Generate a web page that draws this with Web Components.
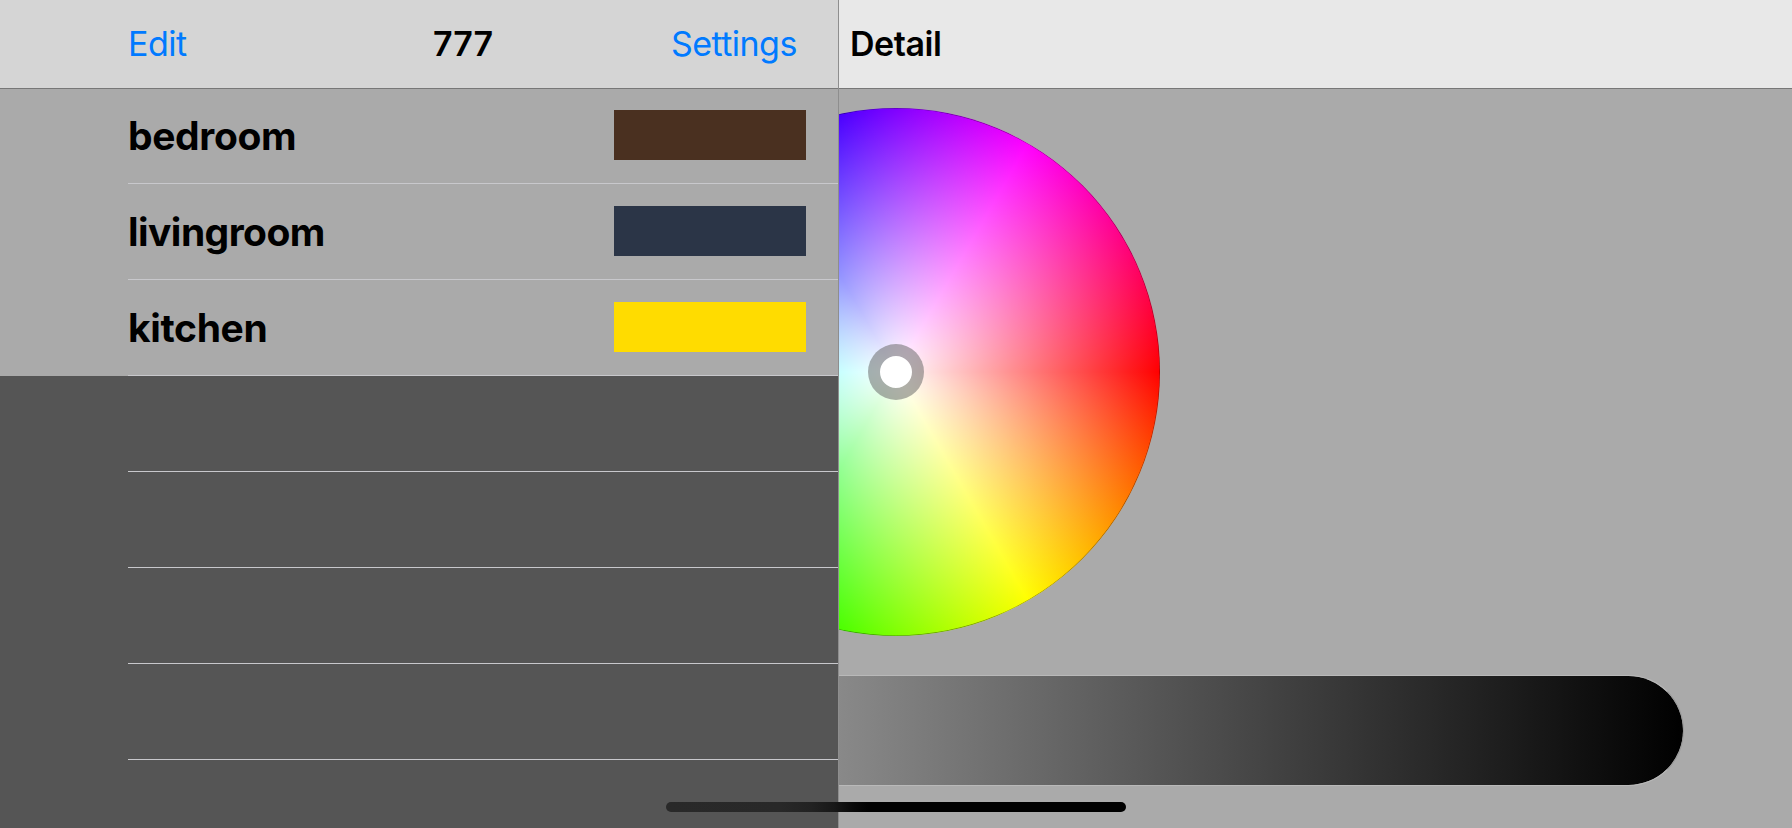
<!DOCTYPE html>
<html lang="en">
<head>
<meta charset="utf-8">
<title>777</title>
<style>
html,body{margin:0;height:100%;overflow:hidden;background:#aaa}
body{font-family:Inter,"Liberation Sans",sans-serif;color:#000}
</style>
</head>
<body>
<split-view>
  <nav-bar slot="master-bar" variant="master">
    <bar-label kind="edit">Edit</bar-label>
    <bar-label kind="title">777</bar-label>
    <bar-label kind="settings">Settings</bar-label>
  </nav-bar>
  <room-row slot="master" color="#4a3020">bedroom</room-row>
  <room-row slot="master" color="#2b3547" style="letter-spacing:-.55px">livingroom</room-row>
  <room-row slot="master" color="#ffdc00">kitchen</room-row>
  <room-row slot="master" empty></room-row>
  <room-row slot="master" empty></room-row>
  <room-row slot="master" empty></room-row>
  <room-row slot="master" empty></room-row>
  <nav-bar slot="detail-bar" variant="detail">
    <bar-label kind="detail">Detail</bar-label>
  </nav-bar>
  <color-wheel slot="detail"></color-wheel>
  <brightness-slider slot="detail"></brightness-slider>
</split-view>
<home-indicator></home-indicator>
<script>
function define(name, html, init) {
  customElements.define(name, class extends HTMLElement {
    constructor() {
      super();
      this.attachShadow({ mode: 'open' }).innerHTML = html;
    }
    connectedCallback() { if (init) init(this); }
  });
}

define('split-view', `
<style>
:host{display:grid;grid-template-columns:838px 1px 1fr;width:100vw;height:100vh;overflow:hidden}
section{display:flex;flex-direction:column;min-width:0;overflow:hidden}
.master{background:#555}
.divider{background:#8e8e8e}
.detail{background:#aaa}
.content{display:flex;flex-direction:column}
.detail .content{padding-top:20px}
</style>
<section class="master"><slot name="master-bar"></slot><div class="content"><slot name="master"></slot></div></section>
<div class="divider"></div>
<section class="detail"><slot name="detail-bar"></slot><div class="content"><slot name="detail"></slot></div></section>
`);

define('nav-bar', `
<style>
:host{display:grid;flex:none;box-sizing:border-box;height:88px;padding-top:23px;align-items:start;box-shadow:0 1px #777;position:relative;z-index:1}
:host([variant=master]){grid-template-columns:305px 238px 1fr;padding-left:128px;background:#d5d5d5}
:host([variant=detail]){padding-left:11px;background:#e8e8e8}
</style>
<slot></slot>
`);

define('bar-label', `
<style>
:host{display:block;font-size:34px;line-height:41px;white-space:nowrap;color:#007aff}
:host([kind=edit]){letter-spacing:-.5px}
:host([kind=settings]){letter-spacing:-.55px}
:host([kind=title]),:host([kind=detail]){font-weight:600;color:#000}
:host([kind=detail]){letter-spacing:-.45px}
</style>
<slot></slot>
`);

define('room-row', `
<style>
:host{display:block;flex:none;height:96px;background:#aaa;letter-spacing:-.35px}
:host([empty]){background:#555}
.cell{box-sizing:border-box;height:96px;margin-left:128px;border-bottom:1px solid #c8c8cc;display:flex;justify-content:space-between;align-items:flex-start;padding-right:32px}
.name{font-weight:700;font-size:39px;line-height:48px;padding-top:24px}
.swatch{width:192px;height:50px;margin-top:22px;background:var(--swatch)}
:host([empty]) .swatch{visibility:hidden}
</style>
<div class="cell"><span class="name"><slot></slot></span><div class="swatch"></div></div>
`, el => el.style.setProperty('--swatch', el.getAttribute('color') || 'transparent'));

define('color-wheel', `
<style>
:host{display:grid;place-items:center;width:528px;height:528px;margin-left:-207px;border-radius:50%;box-sizing:border-box;
background:radial-gradient(circle closest-side,#fff,rgba(255,255,255,0)),conic-gradient(from 90deg,#f00,#ff0,#0f0,#0ff,#00f,#f0f,#f00);box-shadow:inset 0 0 0 .6px rgba(0,0,0,.4)}
.knob{width:32px;height:32px;border:12px solid rgba(95,95,95,.5);border-radius:50%;background:#fff;background-clip:padding-box}
</style>
<div class="knob"></div>
`);

define('brightness-slider', `
<style>
:host{display:block;box-sizing:border-box;width:1576px;height:111px;margin:39px 0 0 -731px;border:1px solid #b9b9b9;border-right-color:#999;border-radius:56px;background:linear-gradient(90deg,#fff,#000) border-box;background-clip:padding-box}
</style>
`);

define('home-indicator', `
<style>
:host{display:block;position:fixed;left:666px;top:802px;width:460px;height:10px;border-radius:5px;z-index:5;
background:linear-gradient(90deg,#292929 0,#282828 115px,#222 145px,#181818 168px,#080808 187px,#000 202px)}
</style>
`);
</script>
</body>
</html>
